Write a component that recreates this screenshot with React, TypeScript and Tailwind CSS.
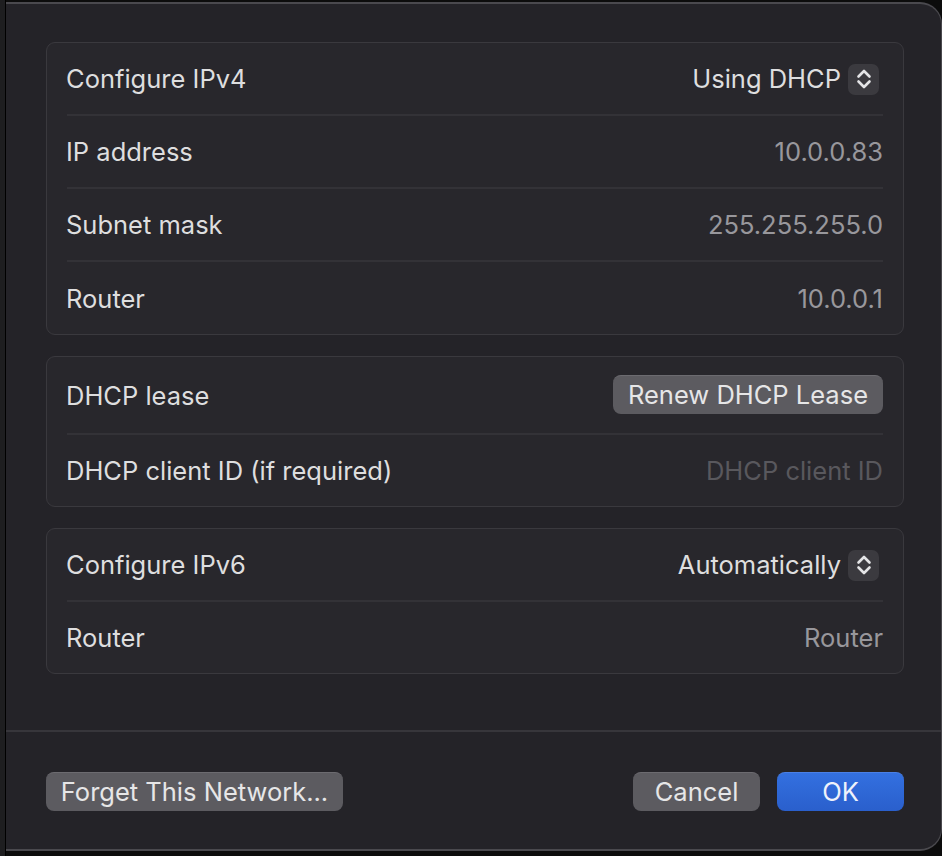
import React from 'react';

const font = { fontFamily: 'Inter, "Noto Sans", sans-serif' };

function Stepper() {
  return (
    <div className="w-[31px] h-[31px] rounded-[7px] bg-[#3b3a3f] flex items-center justify-center">
      <svg width="18" height="24" viewBox="0 0 18 24" fill="none" stroke="#e4e4e6" strokeWidth="2.6" strokeLinecap="round" strokeLinejoin="round">
        <path d="M3.5 9.5 L9 4 L14.5 9.5" />
        <path d="M3.5 14.5 L9 20 L14.5 14.5" />
      </svg>
    </div>
  );
}

function Row({ label, children, h = 'h-[73px]', last = false }: { label: string; children: React.ReactNode; h?: string; last?: boolean }) {
  return (
    <div className={`${h} mx-5 pt-[1px] flex items-center justify-between ${last ? '' : 'border-b-2 border-[#333237]'}`}>
      <span className="text-[#dededf] -ml-px">{label}</span>
      {children}
    </div>
  );
}

function Group({ children }: { children: React.ReactNode }) {
  return <div className="rounded-[9px] border border-[#3a393e] bg-[#28272c]">{children}</div>;
}

const Value = ({ v, dim = false }: { v: string; dim?: boolean }) => (
  <span className={dim ? 'text-[#59585d]' : 'text-[#98979c]'}>{v}</span>
);

export default function App() {
  return (
    <div className="w-[942px] h-[856px] bg-[#0c0c0c] flex text-[25.5px] leading-[30px]" style={font}>
      <div className="w-[5px] bg-[#1e1e20]" />
      <div className="w-px bg-black" />
      <div className="flex-1 mt-[2px] h-[849px] bg-[#242328] border-t-2 border-r border-b-2 border-[#4a494e] rounded-tr-[22px] rounded-br-[22px] flex flex-col">
        <div className="pl-10 pr-[37px] pt-[38px] flex flex-col gap-[21px]">
          <Group>
            <Row label="Configure IPv4">
              <div className="flex items-center gap-[7px] mr-[4px]">
                <span className="text-[#dededf]">Using DHCP</span>
                <Stepper />
              </div>
            </Row>
            <Row label="IP address"><Value v="10.0.0.83" /></Row>
            <Row label="Subnet mask"><Value v="255.255.255.0" /></Row>
            <Row label="Router" last h="h-[72px]"><Value v="10.0.0.1" /></Row>
          </Group>
          <Group>
            <Row label="DHCP lease" h="h-[78px]">
              <button className="h-[39px] w-[270px] rounded-[8px] bg-[#5c5b60] border-t border-[#6c6b70] text-[#e6e6e7] -mt-[3px]">
                Renew DHCP Lease
              </button>
            </Row>
            <Row label="DHCP client ID (if required)" last h="h-[71px]"><Value v="DHCP client ID" dim /></Row>
          </Group>
          <Group>
            <Row label="Configure IPv6">
              <div className="flex items-center gap-[7px] mr-[4px]">
                <span className="text-[#dededf]">Automatically</span>
                <Stepper />
              </div>
            </Row>
            <Row label="Router" last h="h-[71px]"><Value v="Router" /></Row>
          </Group>
        </div>
        <div className="mt-[56px] border-t-2 border-[#37363b]" />
        <div className="pl-10 pr-[37px] pt-[40px] flex items-center justify-between">
          <button className="h-[39px] w-[297px] rounded-[8px] bg-[#5c5b60] border-t border-[#6c6b70] text-[#e6e6e7]">
            Forget This Network...
          </button>
          <div className="flex gap-[17px]">
            <button className="h-[39px] w-[127px] rounded-[8px] bg-[#5c5b60] border-t border-[#6c6b70] text-[#e6e6e7]">
              Cancel
            </button>
            <button className="h-[39px] w-[127px] rounded-[8px] bg-gradient-to-b from-[#3370e0] to-[#2a5fcc] border-t border-[#4a80e6] text-[#eef2fb]">
              OK
            </button>
          </div>
        </div>
      </div>
    </div>
  );
}
